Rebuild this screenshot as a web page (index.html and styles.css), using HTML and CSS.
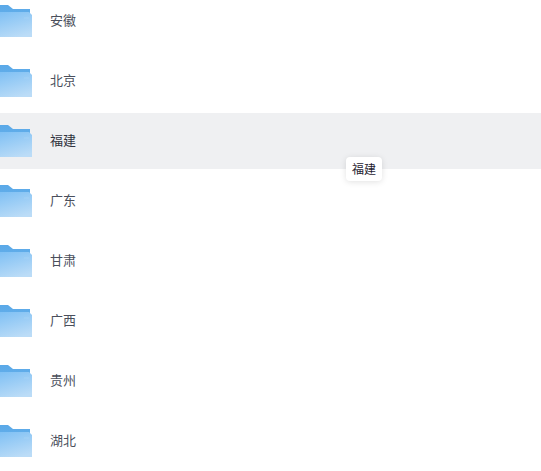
FILE: index.html
```html
<!DOCTYPE html>
<html lang="zh">
<head>
<meta charset="utf-8">
<title>Folders</title>
<link rel="stylesheet" href="styles.css">
</head>
<body>
<svg class="defs" width="0" height="0" aria-hidden="true">
  <defs>
    <linearGradient id="back" x1="0" y1="0" x2="0" y2="1">
      <stop offset="0" stop-color="#5aa9e8"/>
      <stop offset="1" stop-color="#62aeea"/>
    </linearGradient>
    <linearGradient id="front" x1="0.2" y1="0" x2="0.7" y2="1">
      <stop offset="0" stop-color="#7dbff4"/>
      <stop offset="1" stop-color="#bbdcf7"/>
    </linearGradient>
    <symbol id="folder" viewBox="0 0 44 32">
      <path d="M0 0H20L25 4H42V10H0Z" fill="url(#back)"/>
      <path d="M0 7H41L44 10V32H0Z" fill="url(#front)"/>
      <path d="M36 13H41" stroke="#fff" stroke-opacity=".12" fill="none"/>
    </symbol>
  </defs>
</svg>
<ul class="list">
  <li class="row"><svg class="icon"><use href="#folder"/></svg><span class="name">安徽</span></li>
  <li class="row"><svg class="icon"><use href="#folder"/></svg><span class="name">北京</span></li>
  <li class="row active"><svg class="icon"><use href="#folder"/></svg><span class="name">福建</span><span class="tip">福建</span></li>
  <li class="row"><svg class="icon"><use href="#folder"/></svg><span class="name">广东</span></li>
  <li class="row"><svg class="icon"><use href="#folder"/></svg><span class="name">甘肃</span></li>
  <li class="row"><svg class="icon"><use href="#folder"/></svg><span class="name">广西</span></li>
  <li class="row"><svg class="icon"><use href="#folder"/></svg><span class="name">贵州</span></li>
  <li class="row"><svg class="icon"><use href="#folder"/></svg><span class="name">湖北</span></li>
</ul>
</body>
</html>
```
FILE: styles.css
```css
html, body {
  margin: 0;
  height: 100%;
  overflow: hidden;
  background: #fff;
  font-family: "Liberation Sans", "Noto Sans CJK SC", sans-serif;
}
.defs { position: absolute; }
.list {
  list-style: none;
  margin: -7px 0 0;
  padding: 0;
  display: flex;
  flex-direction: column;
  gap: 4px;
}
.row {
  position: relative;
  height: 56px;
  display: flex;
  align-items: center;
  gap: 18px;
}
.active { background: #eff0f2; }
.icon {
  width: 44px;
  height: 32px;
  margin-left: -12px;
  flex: none;
}
.name {
  font-size: 13px;
  line-height: 16px;
  color: #4a4f5c;
}
.active .name { color: #303340; }
.tip {
  position: absolute;
  left: 346px;
  top: 44px;
  height: 24px;
  line-height: 26px;
  padding: 0 6px;
  font-size: 12px;
  color: #1f2230;
  background: #fff;
  border-radius: 4px;
  box-shadow: 0 1px 6px rgba(0, 0, 0, 0.12);
}
```
